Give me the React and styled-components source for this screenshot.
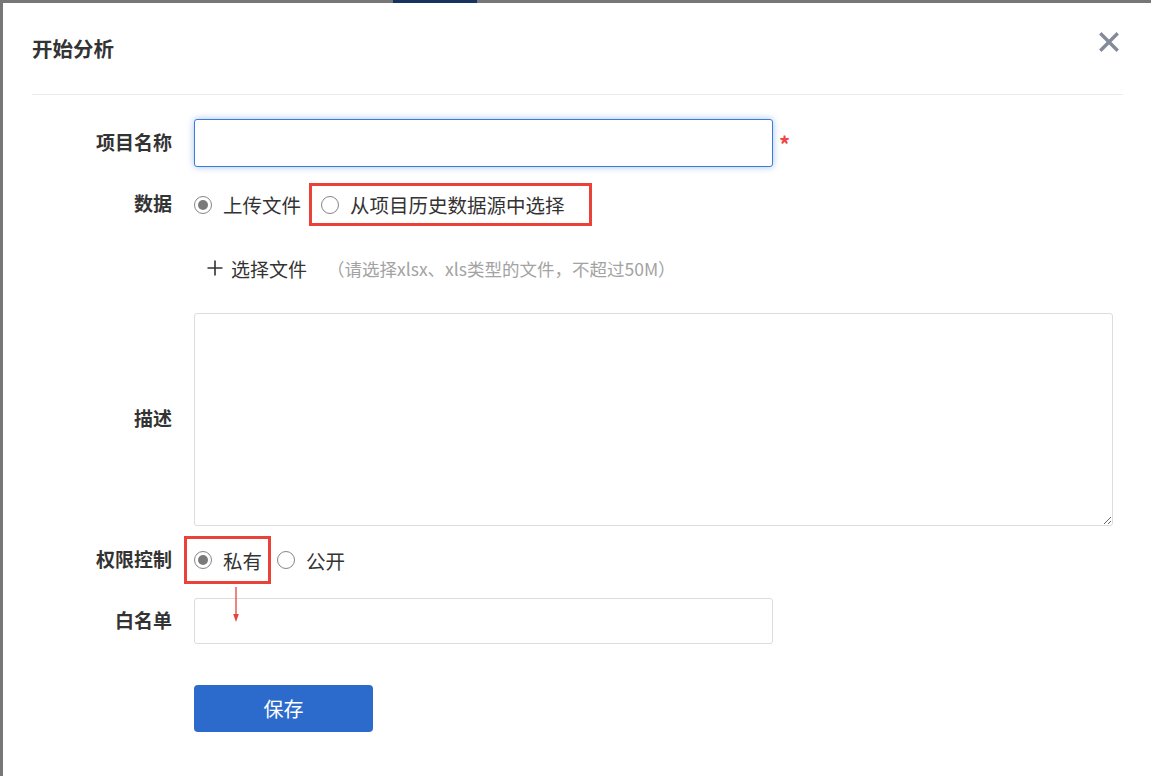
import styled, { createGlobalStyle } from "styled-components";
import { useState } from "react";

const GlobalStyle = createGlobalStyle`
  html, body {
    margin: 0;
    padding: 0;
    background: #777777;
  }
  body {
    font-family: "Noto Sans CJK SC", "Noto Sans", "Liberation Sans", sans-serif;
    color: #333;
  }
  * {
    box-sizing: border-box;
  }
`;

const Backdrop = styled.div`
  display: flex;
  flex-flow: column nowrap;
  width: 100%;
  height: 100vh;
  overflow: hidden;
`;

const TopStrip = styled.div`
  display: flex;
  height: 3px;
  flex-shrink: 0;
`;

const DimmedTab = styled.div`
  margin-left: 393px;
  width: 84px;
  height: 3px;
  background: #16325f;
`;

const Modal = styled.div`
  flex: 1;
  margin-left: 3px;
  background: #fff;
  padding: 0 28px 0 29px;
`;

const Header = styled.div`
  display: flex;
  justify-content: space-between;
  align-items: center;
  height: 92px;
  border-bottom: 1px solid #ebebeb;
`;

const Title = styled.h2`
  margin: 0 0 1px;
  font-size: 20.5px;
  font-weight: 700;
  color: #333;
`;

const CloseButton = styled.button`
  align-self: flex-start;
  margin: 29px 4px 0 0;
  padding: 0;
  width: 20px;
  height: 20px;
  border: none;
  background: none;
  cursor: pointer;
  display: flex;
`;

const Form = styled.form`
  display: flex;
  flex-flow: column nowrap;
  padding-top: 24px;
`;

const FormRow = styled.div`
  display: flex;
  align-items: center;
  margin-top: ${(p) => p.$gap || 0}px;
  min-height: ${(p) => p.$height || 0}px;
`;

const Label = styled.label`
  flex-shrink: 0;
  width: 140px;
  margin: 0 22px 4px 0;
  text-align: right;
  font-size: 19px;
  font-weight: 700;
  color: #333;
`;

const TextInput = styled.input`
  width: 579px;
  height: ${(p) => p.$height || 48}px;
  padding: 0 12px;
  font: inherit;
  font-size: 17px;
  border-radius: 3px;
  border: 1px solid ${(p) => (p.$focused ? "#3a7bdb" : "#dcdcdc")};
  box-shadow: ${(p) => (p.$focused ? "0 0 7px rgba(58, 123, 219, 0.45)" : "none")};
  outline: none;
`;

const Required = styled.span`
  margin: -1px 0 0 6px;
  color: #ef4646;
  font-size: 22px;
  font-weight: 700;
  line-height: 1;
`;

const RadioGroup = styled.div`
  display: flex;
  align-items: center;
`;

const RadioItem = styled.label`
  display: flex;
  align-items: center;
  font-size: 19.5px;
  color: #333;
  cursor: pointer;
  margin-right: ${(p) => p.$space || 0}px;
`;

const RadioCircle = styled.span`
  position: relative;
  width: 18px;
  height: 18px;
  margin-right: 11px;
  border-radius: 50%;
  border: 1.6px solid #858585;
  background: #fff;

  &::after {
    content: "";
    display: ${(p) => (p.$checked ? "block" : "none")};
    position: absolute;
    inset: 3px;
    border-radius: 50%;
    background: #7a7a7a;
  }
`;

const Highlight = styled.div`
  position: relative;
  display: flex;
  align-items: center;
  height: ${(p) => p.$height}px;
  margin-left: ${(p) => p.$shift || 0}px;
  margin-right: ${(p) => p.$after || 0}px;
  padding: 0 ${(p) => p.$right}px 0 ${(p) => p.$left}px;
  border: 3px solid #ea4139;
`;

const ArrowMark = styled.svg`
  position: absolute;
  left: 44px;
  top: calc(100% + 6px);
`;

const UploadButton = styled.button`
  display: flex;
  align-items: center;
  margin-left: 13px;
  padding: 0;
  border: none;
  background: none;
  font: inherit;
  font-size: 19px;
  color: #333;
  cursor: pointer;
`;

const PlusIcon = styled.svg`
  margin-right: 8px;
`;

const Hint = styled.span`
  margin-left: 20px;
  font-size: 17.5px;
  color: #a3a3a3;
`;

const TextArea = styled.textarea`
  width: 919px;
  height: 213px;
  padding: 10px 12px;
  font: inherit;
  font-size: 17px;
  border: 1px solid #dcdcdc;
  border-radius: 3px;
  outline: none;
  resize: both;
`;

const SaveButton = styled.button`
  width: 179px;
  height: 47px;
  border: none;
  border-radius: 4px;
  background: #2c6bcc;
  color: #fff;
  font: inherit;
  font-size: 20px;
  cursor: pointer;
`;

function Radio({ checked, children, onClick, space }) {
  return (
    <RadioItem onClick={onClick} $space={space}>
      <RadioCircle $checked={checked} />
      {children}
    </RadioItem>
  );
}

export default function App() {
  const [source, setSource] = useState("upload");
  const [access, setAccess] = useState("private");

  return (
    <>
      <GlobalStyle />
      <Backdrop>
        <TopStrip>
          <DimmedTab />
        </TopStrip>
        <Modal>
          <Header>
            <Title>开始分析</Title>
            <CloseButton aria-label="关闭">
              <svg width="20" height="20" viewBox="0 0 20 20">
                <path
                  d="M2.5 2.5 L17.5 17.5 M17.5 2.5 L2.5 17.5"
                  stroke="#858a99"
                  strokeWidth="3.4"
                  strokeLinecap="square"
                />
              </svg>
            </CloseButton>
          </Header>

          <Form onSubmit={(e) => e.preventDefault()}>
            <FormRow $height={48}>
              <Label>项目名称</Label>
              <TextInput $focused />
              <Required>*</Required>
            </FormRow>

            <FormRow $gap={16} $height={43}>
              <Label>数据</Label>
              <RadioGroup>
                <Radio
                  checked={source === "upload"}
                  onClick={() => setSource("upload")}
                  space={8}
                >
                  上传文件
                </Radio>
                <Highlight $height={43} $left={9} $right={24}>
                  <Radio
                    checked={source === "history"}
                    onClick={() => setSource("history")}
                  >
                    从项目历史数据源中选择
                  </Radio>
                </Highlight>
              </RadioGroup>
            </FormRow>

            <FormRow $gap={27} $height={30}>
              <Label />
              <UploadButton type="button">
                <PlusIcon width="16" height="16" viewBox="0 0 16 16">
                  <path d="M8 0.5 V15.5 M0.5 8 H15.5" stroke="#333" strokeWidth="1.6" />
                </PlusIcon>
                选择文件
              </UploadButton>
              <Hint>（请选择xlsx、xls类型的文件，不超过50M）</Hint>
            </FormRow>

            <FormRow $gap={30}>
              <Label>描述</Label>
              <TextArea />
            </FormRow>

            <FormRow $gap={10} $height={48}>
              <Label>权限控制</Label>
              <RadioGroup>
                <Highlight $height={48} $shift={-10} $left={7} $right={6} $after={6}>
                  <Radio
                    checked={access === "private"}
                    onClick={() => setAccess("private")}
                  >
                    私有
                  </Radio>
                  <ArrowMark width="10" height="36" viewBox="0 0 10 36">
                    <path d="M5 0 L5 29" stroke="#ea4139" strokeWidth="1.3" />
                    <path d="M2.2 27 L5 35 L7.8 27 Z" fill="#ea4139" />
                  </ArrowMark>
                </Highlight>
                <Radio
                  checked={access === "public"}
                  onClick={() => setAccess("public")}
                >
                  公开
                </Radio>
              </RadioGroup>
            </FormRow>

            <FormRow $gap={14} $height={46}>
              <Label>白名单</Label>
              <TextInput $height={46} />
            </FormRow>

            <FormRow $gap={41}>
              <Label />
              <SaveButton type="submit">保存</SaveButton>
            </FormRow>
          </Form>
        </Modal>
      </Backdrop>
    </>
  );
}
